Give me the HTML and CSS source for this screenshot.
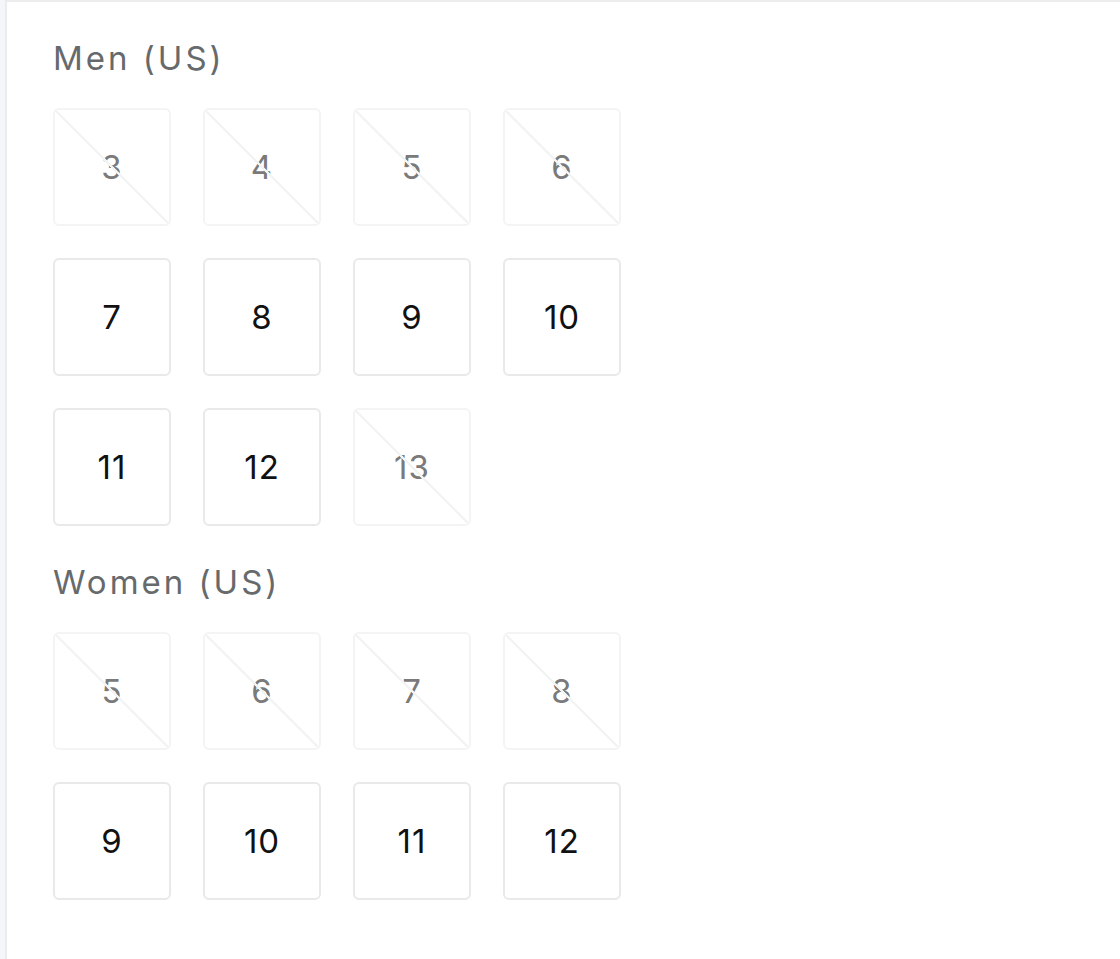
FILE: index.html
```html
<!DOCTYPE html>
<html>
<head>
<meta charset="utf-8">
<link rel="stylesheet" href="styles.css">
</head>
<body>
<div class="panel">
  <section class="group">
    <h2 class="group-title">Men (US)</h2>
    <div class="sizes">
      <div class="size disabled">3</div>
      <div class="size disabled">4</div>
      <div class="size disabled">5</div>
      <div class="size disabled">6</div>
      <div class="size">7</div>
      <div class="size">8</div>
      <div class="size">9</div>
      <div class="size">10</div>
      <div class="size">11</div>
      <div class="size">12</div>
      <div class="size disabled">13</div>
    </div>
  </section>
  <section class="group">
    <h2 class="group-title">Women (US)</h2>
    <div class="sizes">
      <div class="size disabled">5</div>
      <div class="size disabled">6</div>
      <div class="size disabled">7</div>
      <div class="size disabled">8</div>
      <div class="size">9</div>
      <div class="size">10</div>
      <div class="size">11</div>
      <div class="size">12</div>
    </div>
  </section>
</div>
</body>
</html>
```
FILE: styles.css
```css
html, body {
  margin: 0;
  padding: 0;
  height: 100%;
}
body {
  background: #f4f6f9;
  font-family: Inter, "Liberation Sans", sans-serif;
}
.panel {
  margin-left: 5px;
  min-height: 100%;
  box-sizing: border-box;
  background: #fff;
  border-left: 2px solid #e9ecf0;
  border-top: 2px solid #ececec;
  padding: 32px 0 0 46px;
}
.group-title {
  margin: 0 0 26px;
  font-size: 33px;
  line-height: 48px;
  font-weight: 400;
  color: #666a6c;
  letter-spacing: 3px;
}
.sizes {
  display: grid;
  grid-template-columns: repeat(4, 118px);
  grid-auto-rows: 118px;
  gap: 32px;
}
.group + .group {
  margin-top: 32px;
}
.size {
  position: relative;
  box-sizing: border-box;
  border: 2px solid #e9e9e9;
  border-radius: 6px;
  display: flex;
  align-items: center;
  justify-content: center;
  font-size: 33px;
  letter-spacing: 1px;
  color: #111;
  overflow: hidden;
}
.size.disabled {
  border-color: #f4f4f4;
  color: #7a7a7a;
}
.size.disabled::after {
  content: "";
  position: absolute;
  left: 0;
  top: 0;
  width: 100%;
  height: 100%;
  background: linear-gradient(to top right, transparent calc(50% - 1.5px), #f2f4f4 calc(50% - 1px), #f2f4f4 calc(50% + 1px), transparent calc(50% + 1.5px));
}
```
